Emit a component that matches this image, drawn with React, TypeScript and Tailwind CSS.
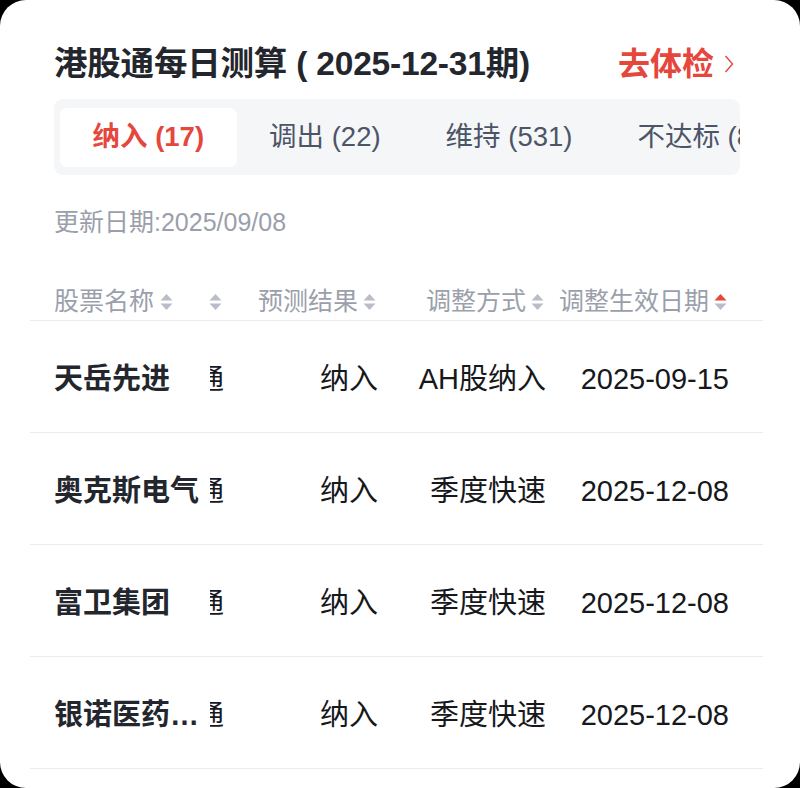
import React from "react";

const font = { fontFamily: '"Liberation Sans", "Noto Sans CJK SC", sans-serif' };

const tabs = [
    { label: "纳入 (17)", active: true },
    { label: "调出 (22)" },
    { label: "维持 (531)" },
    { label: "不达标 (8)" },
];

const rows = [
    { name: "天岳先进", result: "纳入", way: "AH股纳入", date: "2025-09-15" },
    { name: "奥克斯电气", result: "纳入", way: "季度快速", date: "2025-12-08" },
    { name: "富卫集团", result: "纳入", way: "季度快速", date: "2025-12-08" },
    { name: "银诺医药－B", result: "纳入", way: "季度快速", date: "2025-12-08" },
];

function SortIcon({ active }: { active?: boolean }) {
    return (
        <svg width="13" height="18" viewBox="0 0 13 18" className="shrink-0">
            <path d="M6.5 1 L12.5 7.5 L0.5 7.5 Z" fill={active ? "#e5473d" : "#b9bdc7"} />
            <path d="M6.5 17 L12.5 10.5 L0.5 10.5 Z" fill="#b9bdc7" />
        </svg>
    );
}

function HeadCell({ label, active }: { label: string; active?: boolean }) {
    return (
        <div className="flex items-center justify-end gap-[5px] h-[30px] pr-[2px]">
            {label && <span className="whitespace-nowrap">{label}</span>}
            <SortIcon active={active} />
        </div>
    );
}

// grid: name | clipped market col | result | way | date
const cols = "grid grid-cols-[170px_24px_154px_168px_183px_34px]";

export default function App() {
    return (
        <div className="w-[800px] h-[788px] bg-black" style={font}>
            <div className="w-full h-full bg-white rounded-[26px] overflow-hidden">
                {/* Header */}
                <div className="pl-[54px] pr-[60px] pt-[43px]">
                    <div className="flex items-center justify-between h-[42px]">
                        <h1 className="text-[33.5px] font-bold text-[#23262d] tracking-[-0.2px] whitespace-nowrap">
                            港股通每日测算 ( 2025-12-31期)
                        </h1>
                        <div className="flex items-center gap-[10px] pr-[6px] text-[#e5473d]">
                            <span className="text-[32px] font-bold">去体检</span>
                            <svg width="10" height="20" viewBox="0 0 10 20">
                                <path d="M1.5 2 L8.5 10 L1.5 18" fill="none" stroke="#e5473d" strokeWidth="1.4" />
                            </svg>
                        </div>
                    </div>

                    {/* Tabs */}
                    <div className="mt-[14px] h-[76px] bg-[#f5f6f8] rounded-[9px] px-[6px] flex items-center overflow-hidden">
                        {tabs.map((t) => (
                            <div
                                key={t.label}
                                className={`h-[59px] px-[32.5px] flex items-center whitespace-nowrap rounded-[7px] text-[27.5px] ${
                                    t.active ? "bg-white text-[#e5473d] font-semibold" : "text-[#4c5567]"
                                }`}
                            >
                                {t.label}
                            </div>
                        ))}
                    </div>

                    <div className="mt-[32px] text-[25px] text-[#9b9fab] leading-[30px]">更新日期:2025/09/08</div>
                </div>

                {/* Table */}
                <div className="ml-[30px] w-[733px] mt-[50px]">
                    <div className={`${cols} h-[34px] items-start text-[25px] text-[#9b9fab] border-b border-[#ececef]`}>
                        <div className="pl-[24px] flex items-center gap-[6px] h-[30px]">
                            <span className="whitespace-nowrap">股票名称</span>
                            <SortIcon />
                        </div>
                        <HeadCell label="" />
                        <HeadCell label="预测结果" />
                        <HeadCell label="调整方式" />
                        <HeadCell label="调整生效日期" active />
                        <div />
                    </div>
                    {rows.map((r) => (
                        <div
                            key={r.name}
                            className={`${cols} h-[112px] pt-[6px] items-center text-[29px] text-[#16181c] border-b border-[#ececef]`}
                        >
                            <div className="pl-[24px] min-w-0">
                                <div className="truncate font-bold text-[#23262d] w-[150px]">{r.name}</div>
                            </div>
                            <div className="w-[14px] justify-self-end overflow-hidden flex justify-end">
                                <span className="whitespace-nowrap text-[28px]">港股通</span>
                            </div>
                            <div className="text-right whitespace-nowrap">{r.result}</div>
                            <div className="text-right whitespace-nowrap">{r.way}</div>
                            <div className="text-right whitespace-nowrap">{r.date}</div>
                            <div />
                        </div>
                    ))}
                </div>
            </div>
        </div>
    );
}
